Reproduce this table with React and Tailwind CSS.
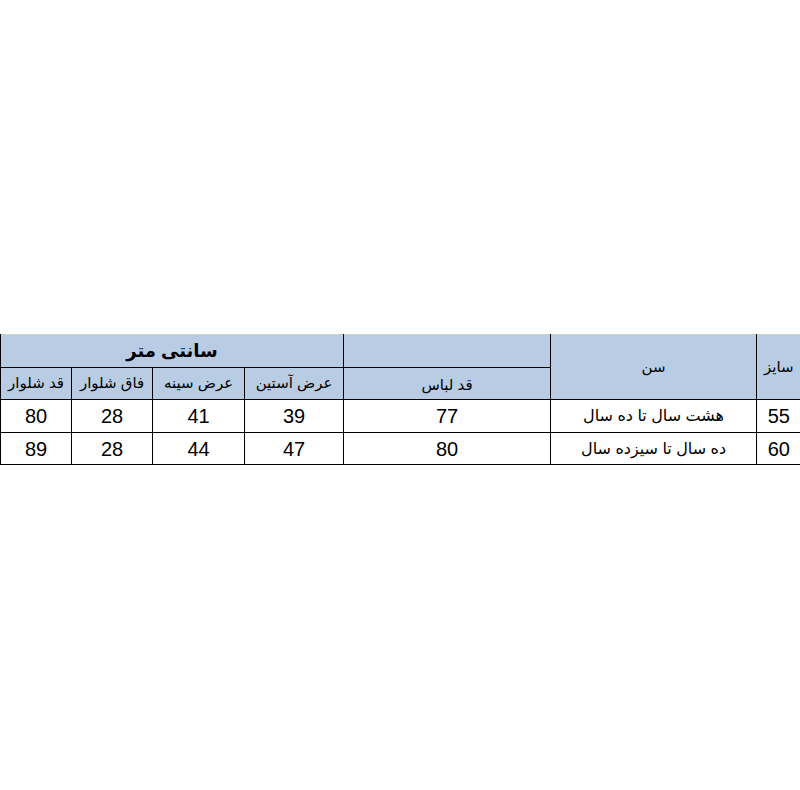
import React from "react";

const font = { fontFamily: '"Liberation Sans", "DejaVu Sans", Arial, sans-serif' };

export default function App() {
  return (
    <div className="w-[800px] h-[790px] bg-white pt-[334px]" style={font}>
      <table dir="rtl" className="w-[800px] table-fixed border-collapse text-black">
        <colgroup>
          <col className="w-[44px]" />
          <col className="w-[206px]" />
          <col className="w-[207px]" />
          <col className="w-[99px]" />
          <col className="w-[92px]" />
          <col className="w-[81px]" />
          <col className="w-[71px]" />
        </colgroup>
        <tbody>
          <tr className="h-[33px] bg-[#b8cce4]">
            <td rowSpan={2} className="border-l border-t border-l-black border-t-[#d0d0d0] text-[15px] text-center p-0 whitespace-nowrap">سایز</td>
            <td rowSpan={2} className="border-l border-t border-l-black border-t-[#d0d0d0] text-[15px] text-center p-0">سن</td>
            <td className="border-l border-t border-b border-l-black border-b-black border-t-[#d0d0d0] p-0"></td>
            <td colSpan={4} className="border-l border-t border-b border-l-black border-b-black border-t-[#d0d0d0] text-[18px] font-bold text-center p-0">سانتی متر</td>
          </tr>
          <tr className="h-[32px] bg-[#b8cce4]">
            <td className="border-l border-black text-[15px] text-center p-0 pt-[3px] whitespace-nowrap">قد لباس</td>
            <td className="border-l border-black text-[15px] text-center p-0 whitespace-nowrap">عرض آستین</td>
            <td className="border-l border-black text-[15px] text-center p-0 whitespace-nowrap">عرض سینه</td>
            <td className="border-l border-black text-[15px] text-center p-0 whitespace-nowrap">فاق شلوار</td>
            <td className="border-l border-black text-[15px] text-center p-0 whitespace-nowrap">قد شلوار</td>
          </tr>
          <tr className="h-[33px] text-[20px]">
            <td className="border-l border-t border-black text-center p-0">55</td>
            <td className="border-l border-t border-black text-center p-0 text-[16px]">هشت سال تا ده سال</td>
            <td className="border-l border-t border-black text-center p-0">77</td>
            <td className="border-l border-t border-black text-center p-0">39</td>
            <td className="border-l border-t border-black text-center p-0">41</td>
            <td className="border-l border-t border-black text-center p-0">28</td>
            <td className="border-l border-t border-black text-center p-0">80</td>
          </tr>
          <tr className="h-[32px] text-[20px]">
            <td className="border-l border-t border-b border-black text-center p-0">60</td>
            <td className="border-l border-t border-b border-black text-center p-0 text-[16px]">ده سال تا سیزده سال</td>
            <td className="border-l border-t border-b border-black text-center p-0">80</td>
            <td className="border-l border-t border-b border-black text-center p-0">47</td>
            <td className="border-l border-t border-b border-black text-center p-0">44</td>
            <td className="border-l border-t border-b border-black text-center p-0">28</td>
            <td className="border-l border-t border-b border-black text-center p-0">89</td>
          </tr>
        </tbody>
      </table>
    </div>
  );
}
